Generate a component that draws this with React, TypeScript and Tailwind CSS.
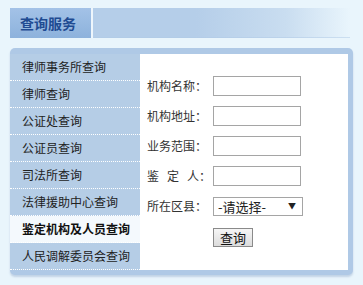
import React from 'react';

const menu = [
  '律师事务所查询',
  '律师查询',
  '公证处查询',
  '公证员查询',
  '司法所查询',
  '法律援助中心查询',
  '鉴定机构及人员查询',
  '人民调解委员会查询',
];

const ACTIVE = 6;

const Field: React.FC<{ label: React.ReactNode }> = ({ label }) => (
  <div className="flex items-center h-[20px]">
    <span className="w-[66px] text-[12px] text-[#333]">{label}</span>
    <input className="w-[88px] h-[20px] border border-[#a5a5a5] bg-white outline-none px-1 text-[12px]" />
  </div>
);

export default function App() {
  return (
    <div
      className="w-[363px] h-[285px] bg-[#e9f5fc] pt-[8px] px-[10px] overflow-hidden"
      style={{ fontFamily: '"Noto Sans CJK SC", "Liberation Sans", sans-serif' }}
    >
      {/* 标题栏 */}
      <div className="flex h-[30px] w-[340px]">
        <div className="w-[81px] bg-gradient-to-b from-[#a3c2e7] to-[#8db2dc] flex items-center pl-[10px]">
          <span className="text-[14px] font-bold text-[#1f4b92]">查询服务</span>
        </div>
        <div className="w-[2px] bg-[#eef6fc]"></div>
        <div className="flex-1 bg-gradient-to-r from-[#b5cee9] from-40% via-[#c9ddf0] via-75% to-[#e9f5fc] border-b border-[#afc9e6]/50"></div>
      </div>

      {/* 主体 */}
      <div className="mt-[10px] w-[343px] h-[227px] bg-[#afc9e6] rounded-[5px] pt-[6px] pb-[5px] pr-[5px] flex shadow-[0_2px_2px_rgba(120,150,190,0.35)]">
        <ul className="w-[130px] flex flex-col">
          {menu.map((m, i) => (
            <li
              key={m}
              className={
                'h-[27px] flex items-center pl-[12px] text-[12px] border-b border-dotted border-white ' +
                (i === ACTIVE ? 'bg-[#f4f9fd] font-bold text-[#111]' : 'bg-[#b5cde6] text-[#222]')
              }
            >
              {m}
            </li>
          ))}
        </ul>
        <div className="flex-1 bg-white pl-[7px] pt-[22px] flex flex-col gap-[10px]">
          <Field label="机构名称：" />
          <Field label="机构地址：" />
          <Field label="业务范围：" />
          <Field label={<><span className="tracking-[8px]">鉴定</span>人：</>} />
          <div className="flex items-center h-[20px]">
            <span className="w-[66px] text-[12px] text-[#333]">所在区县：</span>
            <div className="relative w-[90px] h-[19px]">
              <select className="appearance-none block w-full h-full border border-[#a5a5a5] bg-white text-[13px] text-[#222] pl-[4px] py-0 outline-none leading-[17px]">
                <option>-请选择-</option>
              </select>
              <span className="absolute inset-y-0 right-[7px] flex items-center text-[8px] text-[#222] pointer-events-none">▼</span>
            </div>
          </div>
          <div className="pl-[66px] -mt-[2px]">
            <button className="w-[40px] h-[19px] border border-[#8a8a8a] bg-gradient-to-b from-[#f6f6f6] to-[#dcdcdc] text-[13px] text-[#111] leading-none">
              查询
            </button>
          </div>
        </div>
      </div>
    </div>
  );
}
